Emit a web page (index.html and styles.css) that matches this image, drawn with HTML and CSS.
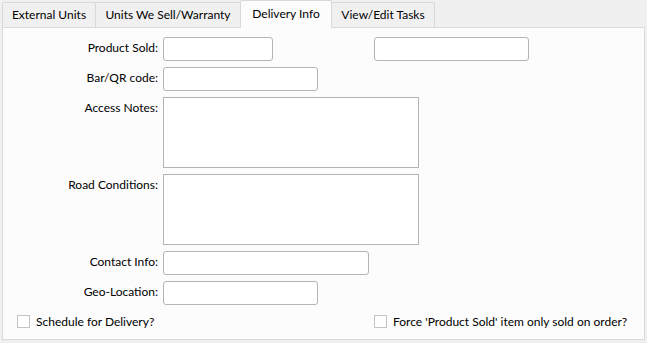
FILE: index.html
```html
<!DOCTYPE html>
<html lang="en">
<head>
  <meta charset="UTF-8">
  <title>Delivery Info</title>
  <link rel="stylesheet" href="styles.css">
</head>
<body>
  <div class="tabs">
    <div class="tab tab-ext">External Units</div>
    <div class="tab tab-sell">Units We Sell/Warranty</div>
    <div class="tab tab-active">Delivery Info</div>
    <div class="tab tab-tasks">View/Edit Tasks</div>
  </div>

  <div class="panel">
    <div class="form">
      <label>Product Sold:</label>
      <div class="pair">
        <input type="text" class="w110">
        <input type="text" class="w155 extra">
      </div>

      <label>Bar/QR code:</label>
      <input type="text" class="w155">

      <label>Access Notes:</label>
      <textarea class="notes"></textarea>

      <label>Road Conditions:</label>
      <textarea class="notes"></textarea>

      <label>Contact Info:</label>
      <input type="text" class="w206">

      <label>Geo-Location:</label>
      <input type="text" class="w155">
    </div>

    <div class="checks">
      <label class="check check-left"><span class="box"></span>Schedule for Delivery?</label>
      <label class="check"><span class="box"></span>Force 'Product Sold' item only sold on order?</label>
    </div>
  </div>
</body>
</html>
```

FILE: styles.css
```css
body {
  margin: 0;
  padding: 0 0 0 2px;
  background-color: #f0f0f0;
  font-family: Lato, "Noto Sans", sans-serif;
  font-size: 12px;
  line-height: 15px;
  color: #000;
}
.tabs {
  display: flex;
  align-items: flex-end;
  height: 27px;
}
.tab {
  box-sizing: border-box;
  height: 25px;
  border: 1px solid #d9d9d9;
  border-bottom: none;
  border-radius: 2px 2px 0 0;
  background-color: #f0f0f0;
  text-align: center;
  line-height: 24px;
  margin-right: -1px;
}
.tab-ext { width: 94px; }
.tab-sell { width: 146px; }
.tab-tasks { width: 104px; }
.tab-active {
  position: relative;
  z-index: 1;
  width: 92px;
  height: 28px;
  margin-bottom: -1px;
  background-color: #fcfcfc;
  line-height: 26px;
}
.panel {
  box-sizing: border-box;
  width: 643px;
  height: 313px;
  border: 1px solid #d9d9d9;
  background-color: #fcfcfc;
  padding: 9px 0 0 0;
}
.form {
  display: grid;
  grid-template-columns: 155px auto;
  grid-template-rows: 24px 24px 71px 71px 24px 24px;
  column-gap: 5px;
  row-gap: 6px;
  align-items: start;
}
.form label {
  text-align: right;
  padding-top: 3px;
}
input, textarea {
  display: block;
  box-sizing: border-box;
  height: 24px;
  border: 1px solid #b4b4b4;
  border-radius: 3px;
  background-color: #fff;
  margin: 0;
  padding: 0;
  font: inherit;
}
.pair {
  display: flex;
  gap: 101px;
}
.w110 { width: 110px; }
.w155 { width: 155px; }
.w206 { width: 206px; }
textarea.notes {
  width: 256px;
  height: 71px;
  border-radius: 0;
  resize: none;
}
.checks {
  display: flex;
  margin-top: 9px;
  padding-left: 14px;
}
.check {
  display: flex;
  align-items: center;
  gap: 6px;
}
.check-left {
  width: 357px;
}
.box {
  box-sizing: border-box;
  width: 13px;
  height: 13px;
  border: 1px solid #c4c4c4;
  background-color: #fff;
}
```
